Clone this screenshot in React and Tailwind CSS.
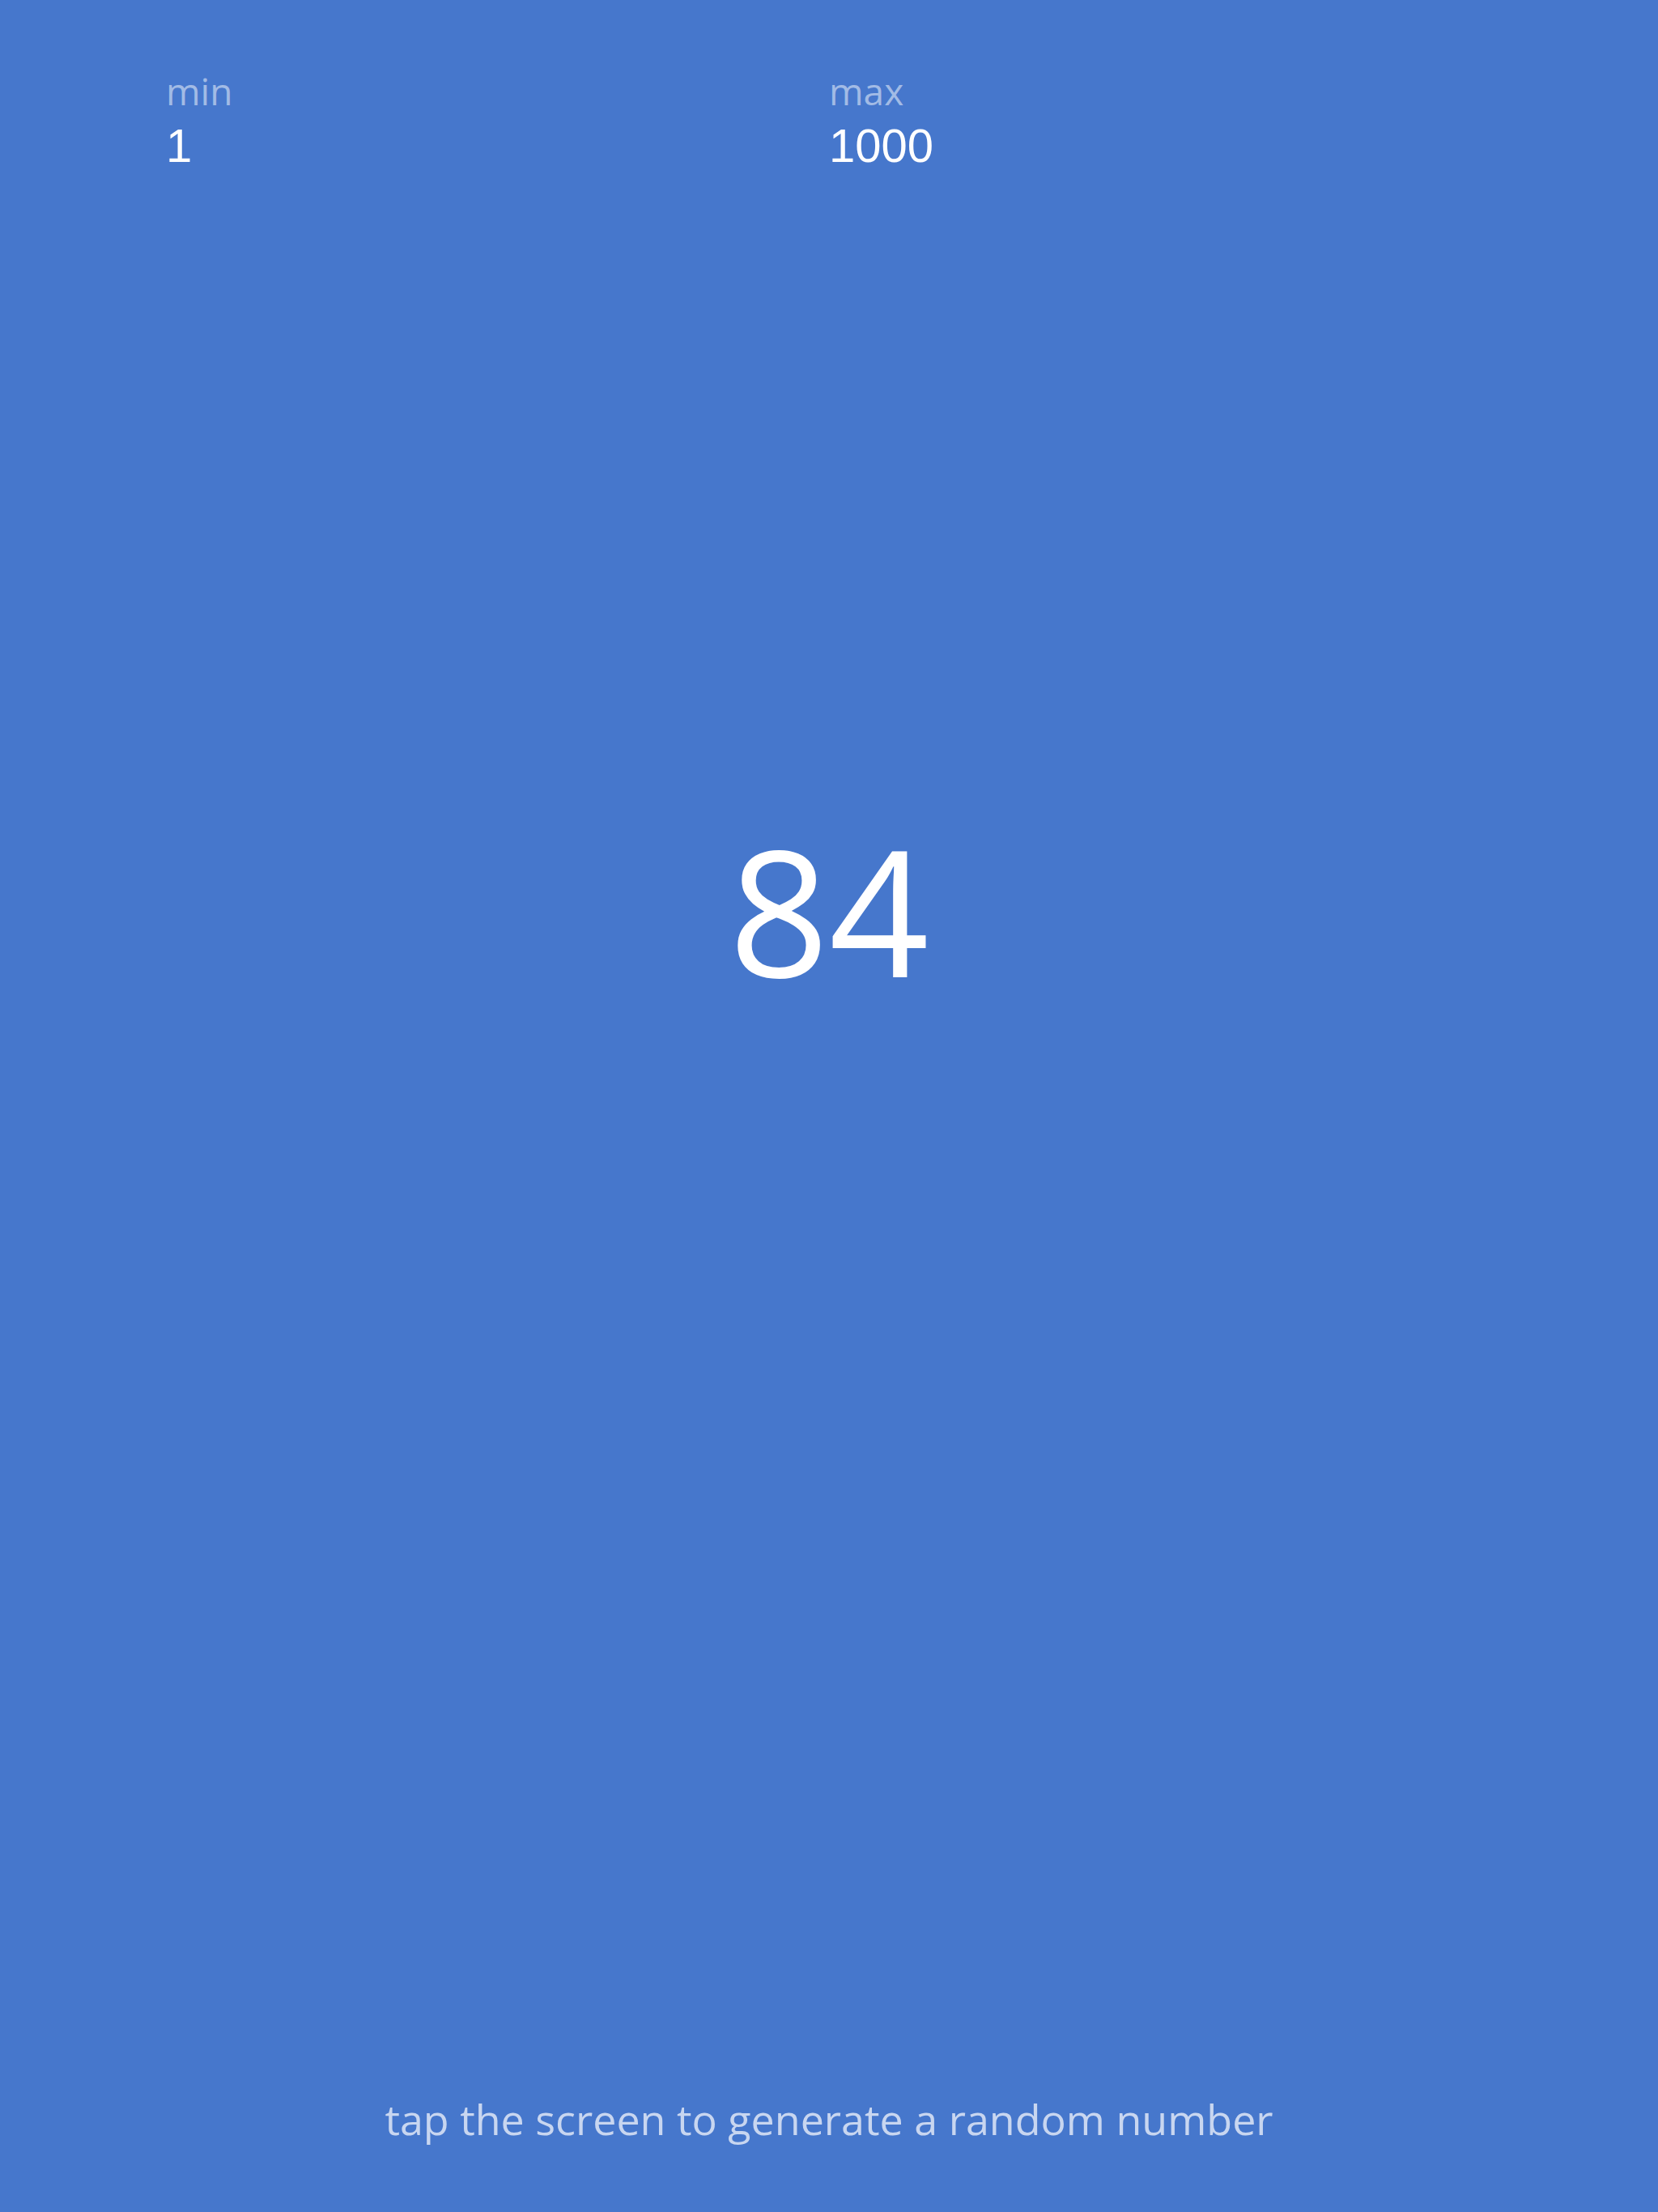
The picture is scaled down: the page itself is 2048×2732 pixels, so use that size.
import React from 'react'

const App = () => {
    return (
        <div className="min-h-screen h-[2732px] w-full bg-[#4677cc] flex flex-col select-none">
            <div className="grid grid-cols-2 px-[205px] pt-[82px] h-[217px]">
                <div>
                    <p className="text-[46px] leading-[60px] text-[#a2bbe5] font-['Open_Sans',sans-serif]">min</p>
                    <p className="text-[58px] leading-[76px] text-white font-['Liberation_Sans',Arial,sans-serif]">1</p>
                </div>
                <div>
                    <p className="text-[46px] leading-[60px] text-[#a2bbe5] font-['Open_Sans',sans-serif]">max</p>
                    <p className="text-[58px] leading-[76px] text-white font-['Liberation_Sans',Arial,sans-serif]">1000</p>
                </div>
            </div>
            <div className="flex-1 flex justify-center pt-[798px]">
                <p className="text-[216px] leading-none text-white font-['Open_Sans',sans-serif]">84</p>
            </div>
            <div className="pb-[80px] text-center">
                <p className="text-[52px] leading-[70px] text-[#c8d6f0] font-['Open_Sans',sans-serif]">tap the screen to generate a random number</p>
            </div>
        </div>
    )
}

export default App
